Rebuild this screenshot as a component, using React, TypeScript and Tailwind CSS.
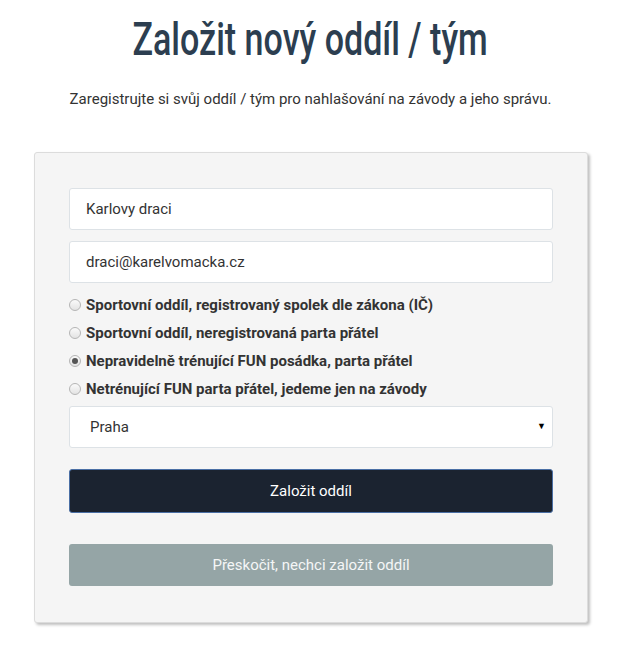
import React from "react";

const radios = [
  "Sportovní oddíl, registrovaný spolek dle zákona (IČ)",
  "Sportovní oddíl, neregistrovaná parta přátel",
  "Nepravidelně trénující FUN posádka, parta přátel",
  "Netrénující FUN parta přátel, jedeme jen na závody",
];

export default function App() {
  return (
    <div className="w-[643px] h-[650px] bg-white" style={{ fontFamily: "Roboto, sans-serif" }}>
      <div className="w-[621px] pt-[13px] flex flex-col items-center">
        <h1
          className="text-[46px] leading-[52px] text-[#2c3e50] font-medium origin-center scale-x-[0.74] whitespace-nowrap"
          style={{ fontFamily: "'Liberation Sans Narrow', 'Roboto', sans-serif" }}
        >
          Založit nový oddíl / tým
        </h1>
        <p className="mt-[24px] text-[15px] leading-[20px] text-[#333]">
          Zaregistrujte si svůj oddíl / tým pro nahlašování na závody a jeho správu.
        </p>
      </div>
      <div className="ml-[34px] mt-[43px] w-[554px] bg-[#f5f5f5] border border-[#dcdcdc] rounded-[3px] shadow-[2px_2px_3px_rgba(0,0,0,0.25)] px-[34px] pt-[35px] pb-[36px]">
        <div className="h-[42px] bg-white border border-[#dde2e6] rounded-[3px] flex items-center px-[16px] text-[15px] text-[#333]">
          Karlovy draci
        </div>
        <div className="mt-[11px] h-[42px] bg-white border border-[#dde2e6] rounded-[3px] flex items-center px-[16px] text-[15px] text-[#333]">
          draci@karelvomacka.cz
        </div>
        <div className="mt-[8px] flex flex-col">
          {radios.map((r, i) => (
            <div key={i} className="h-[28px] flex items-center gap-[5px]">
              <span className="w-[12px] h-[12px] rounded-full border border-[#b5b5b5] bg-gradient-to-b from-[#fafafa] to-[#e3e3e3] flex items-center justify-center">
                {i === 2 && <span className="w-[6px] h-[6px] rounded-full bg-[#555]" />}
              </span>
              <span className="text-[15px] font-bold text-[#333]">{r}</span>
            </div>
          ))}
        </div>
        <div className="mt-[3px] h-[42px] bg-white border border-[#dde2e6] rounded-[3px] flex items-center justify-between pl-[20px] pr-[6px] text-[15px] text-[#333]">
          <span>Praha</span>
          <span className="text-[9px] text-black">▼</span>
        </div>
        <div className="mt-[21px] h-[44px] bg-[#1b2330] border border-[#4a6fa5] rounded-[3px] flex items-center justify-center text-[15px] text-white">
          Založit oddíl
        </div>
        <div className="mt-[31px] h-[42px] bg-[#95a5a6] rounded-[3px] flex items-center justify-center text-[15px] text-[#f4f6f6]">
          Přeskočit, nechci založit oddíl
        </div>
      </div>
    </div>
  );
}
